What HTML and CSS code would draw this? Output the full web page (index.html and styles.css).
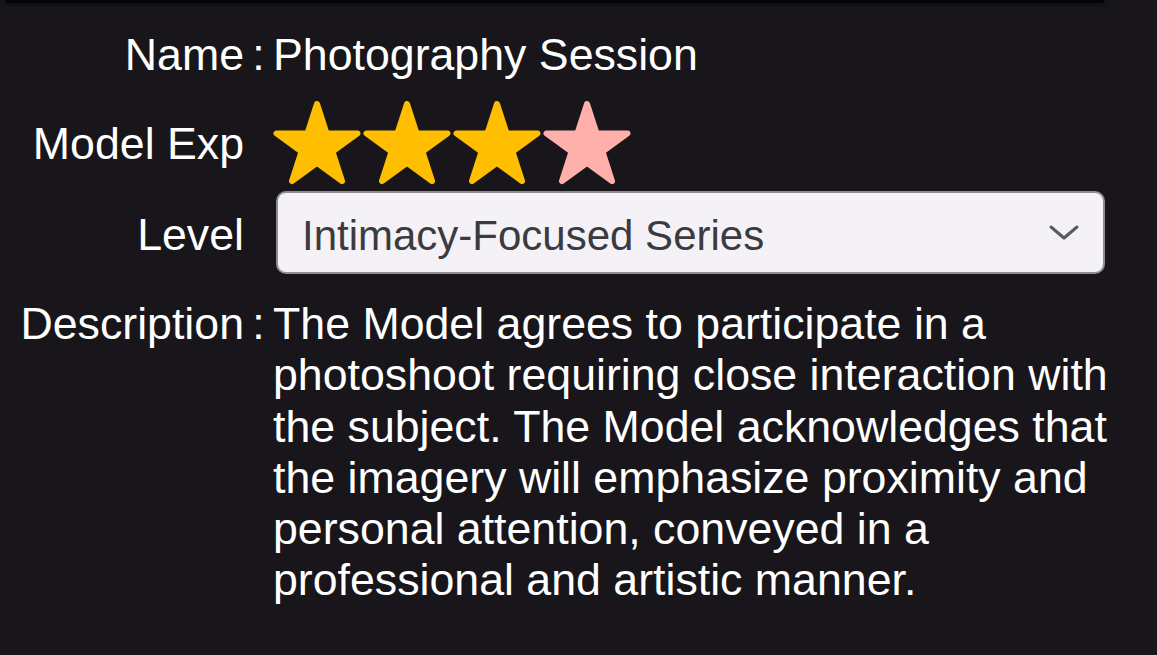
FILE: index.html
```html
<!DOCTYPE html>
<html lang="en">
<head>
<meta charset="utf-8">
<title>Photography Session</title>
<link rel="stylesheet" href="styles.css">
</head>
<body>
<div class="topbar"></div>
<div class="form">
  <div class="row row-name">
    <div class="label">Name</div>
    <div class="colon">:</div>
    <div class="value">Photography Session</div>
  </div>
  <div class="row row-center row-stars">
    <div class="label">Model Exp</div>
    <div class="colon"></div>
    <div class="stars">
      <svg class="star gold" viewBox="0 0 88 84" width="88" height="84"><polygon points="44,3 53.56,32.44 84.52,32.44 59.47,50.63 69.04,80.06 44,61.87 18.96,80.06 28.53,50.63 3.48,32.44 34.44,32.44"/></svg>
      <svg class="star gold" viewBox="0 0 88 84" width="88" height="84"><polygon points="44,3 53.56,32.44 84.52,32.44 59.47,50.63 69.04,80.06 44,61.87 18.96,80.06 28.53,50.63 3.48,32.44 34.44,32.44"/></svg>
      <svg class="star gold" viewBox="0 0 88 84" width="88" height="84"><polygon points="44,3 53.56,32.44 84.52,32.44 59.47,50.63 69.04,80.06 44,61.87 18.96,80.06 28.53,50.63 3.48,32.44 34.44,32.44"/></svg>
      <svg class="star pink" viewBox="0 0 88 84" width="88" height="84"><polygon points="44,3 53.56,32.44 84.52,32.44 59.47,50.63 69.04,80.06 44,61.87 18.96,80.06 28.53,50.63 3.48,32.44 34.44,32.44"/></svg>
    </div>
  </div>
  <div class="row row-center row-level">
    <div class="label">Level</div>
    <div class="colon"></div>
    <div class="select">
      <span class="select-text">Intimacy-Focused Series</span>
      <svg class="chevron" viewBox="0 0 30 16" width="30" height="16"><polyline points="2,2 15,13 28,2"/></svg>
    </div>
  </div>
  <div class="row row-desc">
    <div class="label">Description</div>
    <div class="colon">:</div>
    <div class="value">The Model agrees to participate in a photoshoot requiring close interaction with the subject. The Model acknowledges that the imagery will emphasize proximity and personal attention, conveyed in a professional and artistic manner.</div>
  </div>
</div>
</body>
</html>
```
FILE: styles.css
```css
html, body {
  margin: 0;
  padding: 0;
  background: #18161a;
}
body {
  width: 1157px;
  height: 655px;
  overflow: hidden;
  font-family: "Liberation Sans", Arial, sans-serif;
  font-size: 44.7px;
  line-height: 51.2px;
  color: #ffffff;
}
.topbar {
  height: 3px;
  width: 1098px;
  margin-left: 6px;
  background: #050405;
  box-shadow: 0 1px 4px rgba(0, 0, 0, 0.8);
}
.form {
  padding-top: 26px;
  display: flex;
  flex-direction: column;
}
.row {
  display: grid;
  grid-template-columns: 244px 29px 840px;
  align-items: baseline;
}
.row-center {
  align-items: center;
}
.label {
  text-align: right;
  white-space: nowrap;
}
.colon {
  text-align: center;
}
.row-stars {
  margin-top: 21px;
  height: 84px;
}
.stars {
  display: flex;
  gap: 2px;
  height: 84px;
}
.star {
  display: block;
}
.star polygon {
  stroke-width: 6;
  stroke-linejoin: round;
}
.gold polygon {
  fill: #ffbf00;
  stroke: #ffbf00;
}
.pink polygon {
  fill: #ffb0ab;
  stroke: #ffb0ab;
}
.row-level {
  margin-top: 6px;
}
.row-level .label {
  padding-top: 3px;
}
.select {
  margin-left: 3px;
  width: 829px;
  height: 83px;
  box-sizing: border-box;
  background: #f4f2f6;
  border: 2px solid #8f8d91;
  border-radius: 10px;
  display: flex;
  align-items: center;
  justify-content: space-between;
  padding: 5px 24px 0 24px;
}
.select-text {
  font-size: 42px;
  color: #3b3a3d;
  white-space: nowrap;
}
.chevron {
  margin-top: -4px;
}
.chevron polyline {
  fill: none;
  stroke: #5a595c;
  stroke-width: 3;
  stroke-linecap: round;
  stroke-linejoin: round;
}
.row-desc {
  margin-top: 24px;
}
.row-desc .value {
  width: 840px;
}
```
